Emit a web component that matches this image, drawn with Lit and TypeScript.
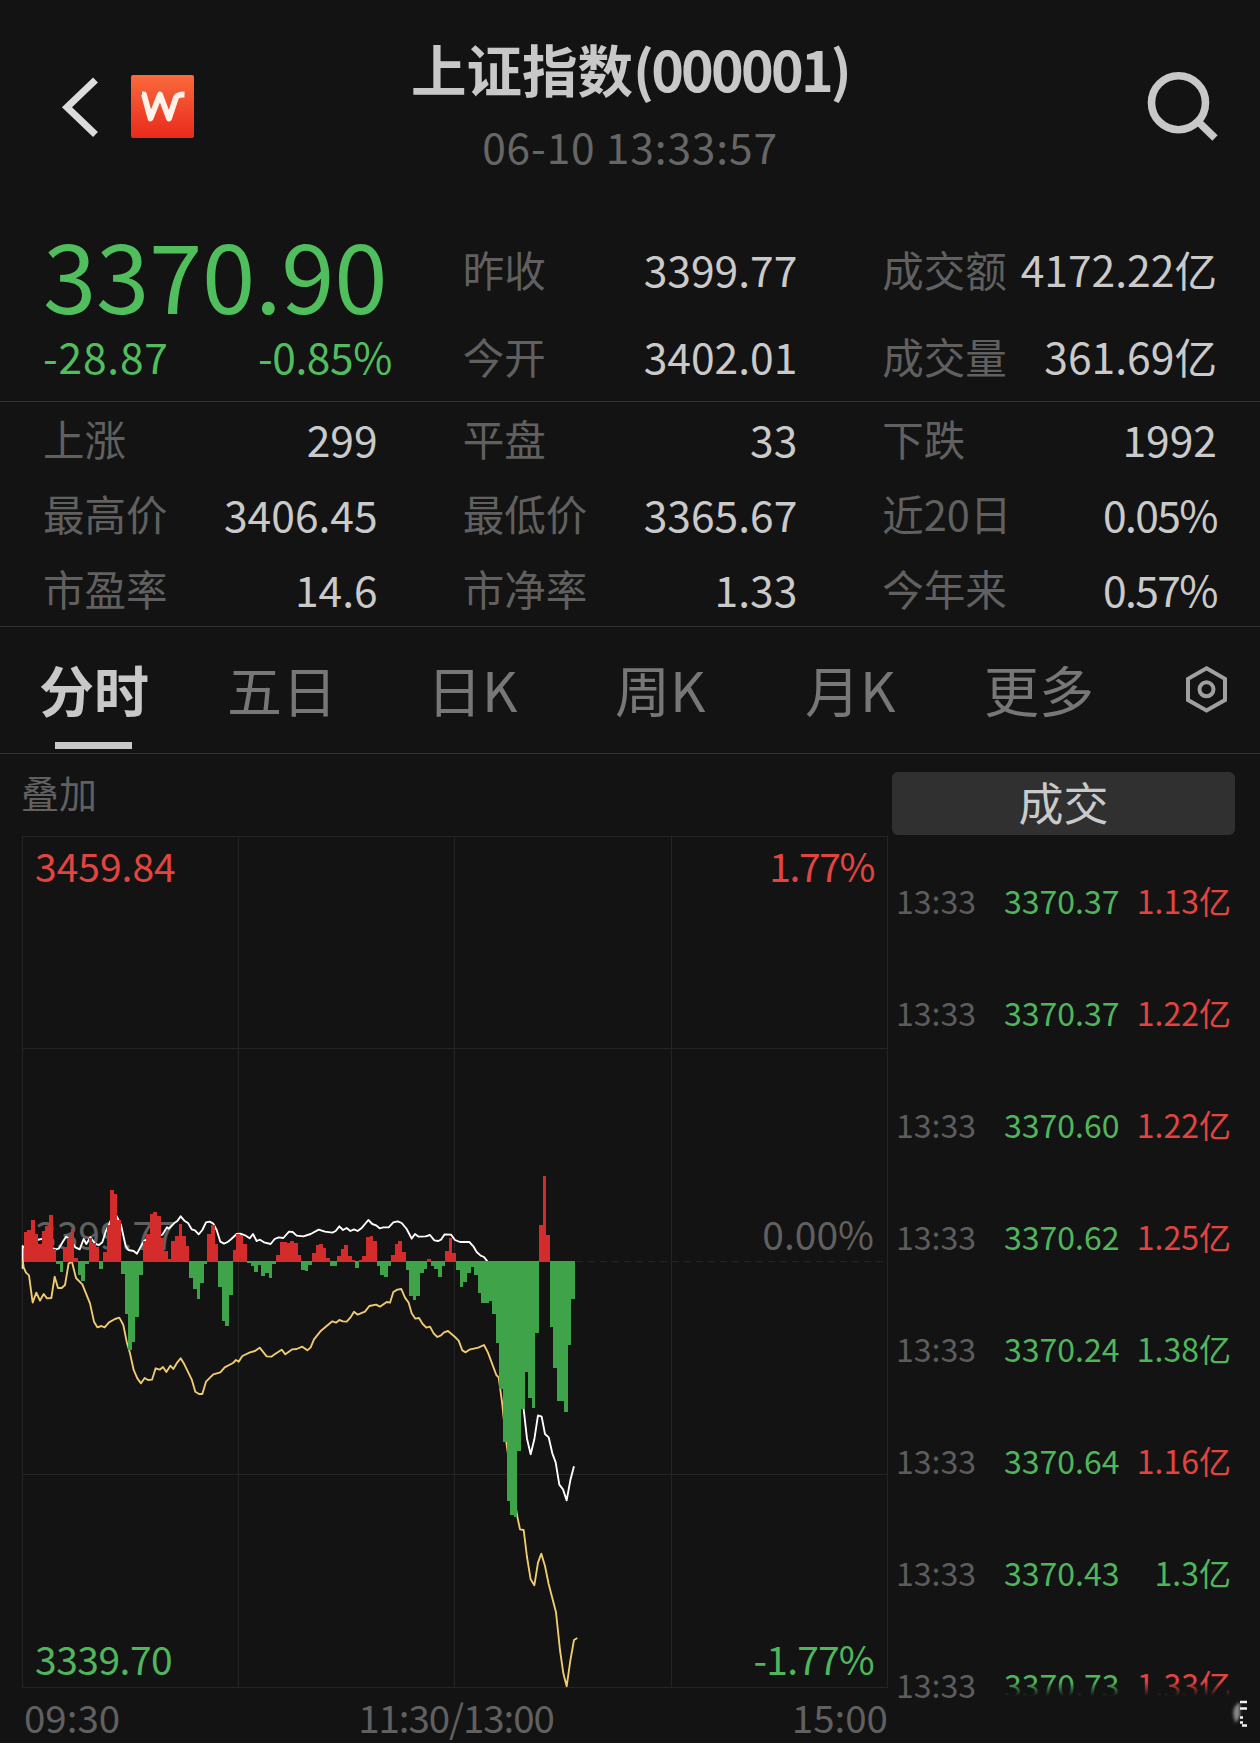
import { LitElement, html, css, svg } from "lit";
import { customElement } from "lit/decorators.js";
import { classMap } from "lit/directives/class-map.js";

const SUMMARY = [
  ["昨收", "3399.77"],
  ["成交额", "4172.22亿"],
  ["今开", "3402.01"],
  ["成交量", "361.69亿"],
];

const STATS = [
  ["上涨", "299"],
  ["平盘", "33"],
  ["下跌", "1992"],
  ["最高价", "3406.45"],
  ["最低价", "3365.67"],
  ["近20日", "0.05%"],
  ["市盈率", "14.6"],
  ["市净率", "1.33"],
  ["今年来", "0.57%"],
];

const TABS = ["分时", "五日", "日K", "周K", "月K", "更多"];

const TRADES: [string, string, string, "up" | "down"][] = [
  ["13:33", "3370.37", "1.13亿", "up"],
  ["13:33", "3370.37", "1.22亿", "up"],
  ["13:33", "3370.60", "1.22亿", "up"],
  ["13:33", "3370.62", "1.25亿", "up"],
  ["13:33", "3370.24", "1.38亿", "down"],
  ["13:33", "3370.64", "1.16亿", "up"],
  ["13:33", "3370.43", "1.3亿", "down"],
  ["13:33", "3370.73", "1.33亿", "up"],
];

/* One momentum bar per minute, in thirds of a pixel; positive is above the zero line. */
const BARS = [
  89, 93, 123, 82, 53, 91, 105, 139, 36, -8, -31, 44, 71, 96, 10, -41, -58, -8, 71, 54,
  42, -23, 29, 109, 214, 201, 123, -38, -157, -266, -241, -166, -42, 61, 81, 141, 148, 136, 71, 31,
  6, 62, 75, 111, 75, 47, -50, -82, -113, -64, -7, 82, 109, 52, -77, -178, -193, -100, 33, 82,
  80, 51, -5, -13, -32, -12, -44, -34, -49, -8, 20, 57, 57, 55, 61, 55, 19, -26, -28, -11,
  25, 48, 53, 41, 9, -13, -13, 15, 37, 50, 15, 3, -20, 4, 17, 73, 77, 61, -15, -40,
  -46, -14, 20, 52, 60, 28, -26, -104, -115, -104, -36, -23, 6, -14, -22, -47, -14, 32, 71, 25,
  -26, -76, -62, -34, -16, -41, -95, -125, -125, -120, -158, -246, -382, -543, -720, -761, -766, -570, -443, -333,
  -411, -440, -214, 108, 256, 78, -197, -320, -418, -418, -453, -250, -113,
];

const PRICE =
  "38,326 38,258 41,262 60,250 80,240 100,236 120,262 139,268 147,265 158,246 168,230 182,240 196,262 209,268 221,237 229,252 241,232 256,252 267,255 277,247 288,212 300,187 310,160 318,165 333,195 347,258 355,270 371,273 381,281 391,262 402,243 420,232 442,228 457,224 471,202 477,206 492,190 502,183 512,169 523,182 534,189 545,208 555,211 566,223 577,210 588,187 599,185 610,191 620,210 631,245 642,251 653,246 664,237 680,222 691,221 705,226 719,235 729,222 740,243 750,239 762,247 782,252 794,237 806,232 820,234 837,215 848,216 860,227 880,229 902,222 926,209 945,215 967,218 977,213 988,199 999,210 1010,204 1021,213 1032,208 1043,213 1056,203 1075,180 1087,192 1098,196 1109,205 1120,202 1136,202 1150,187 1163,184 1175,189 1190,207 1205,236 1215,222 1226,230 1247,229 1260,225 1273,241 1285,243 1293,239 1304,223 1323,224 1335,240 1350,246 1378,246 1390,259 1400,276 1412,287 1422,291 1432,304 1470,400 1510,560 1541,747 1551,836 1562,883 1573,838 1584,766 1595,770 1605,822 1616,832 1627,880 1637,907 1648,974 1659,988 1670,1021 1681,961 1692,919";

const AVERAGE =
  "38,300 41,322 48,338 57,346 68,428 79,398 90,422 101,402 111,415 124,414 134,350 144,384 155,384 165,375 176,310 186,306 198,354 217,373 240,430 252,485 262,502 274,498 284,502 297,487 315,477 328,473 340,495 350,545 360,580 371,630 382,655 393,670 404,654 414,660 426,659 437,625 449,629 459,621 469,636 481,617 490,627 502,607 512,595 523,613 545,658 556,695 567,702 577,702 588,665 610,643 631,637 644,622 669,609 678,600 686,605 697,588 720,577 735,573 749,563 770,589 784,590 794,583 815,569 826,583 847,568 860,567 877,560 892,571 902,562 912,538 933,512 967,484 978,488 988,480 999,484 1010,485 1021,473 1032,455 1043,464 1065,455 1078,438 1098,434 1110,440 1130,426 1140,428 1150,396 1162,389 1174,387 1185,413 1196,428 1205,460 1216,476 1227,474 1238,492 1249,503 1260,500 1271,520 1282,531 1293,526 1302,517 1314,513 1335,531 1346,542 1357,571 1367,577 1378,569 1405,563 1422,555 1434,578 1459,645 1466,652 1477,733 1481,774 1490,854 1505,960 1522,1070 1530,1108 1541,1110 1551,1191 1562,1258 1573,1276 1584,1208 1594,1181 1605,1218 1616,1272 1638,1357 1650,1470 1660,1540 1670,1579 1681,1502 1692,1440 1702,1434";

@customElement("app-header")
class AppHeader extends LitElement {
  static styles = css`
    :host { display: grid; grid-template-columns: 210px 1fr 210px; height: 209px; }
    .left { display: flex; align-items: flex-start; padding: 74px 0 0 60px; gap: 30px; }
    .left svg, .right svg { display: block; }
    .mid { display: flex; flex-direction: column; align-items: center; padding-top: 38px; gap: 22px; }
    .title { font-size: 55.5px; line-height: 60px; font-weight: 700; color: #c8c8c8; white-space: nowrap; margin: 0; }
    .code { letter-spacing: -2.8px; }
    .time { font-size: 42.5px; line-height: 52px; color: #666; letter-spacing: .85px; white-space: nowrap; }
    .right { padding: 66px 0 0 65px; }
  `;
  render() {
    return html`
      <div class="left">
        <svg width="41" height="66" viewBox="0 0 41 66"><path d="M35.5 6 7 33.3 35.500 60.500" fill="none" stroke="#dcdcdc" stroke-width="7"/></svg>
        <svg width="64" height="65" viewBox="0 0 64 65">
          <defs><linearGradient id="g" x1="0" y1="0" x2="0" y2="1"><stop offset="0" stop-color="#f96a3c"/><stop offset="1" stop-color="#e92a1c"/></linearGradient></defs>
          <rect x="0" y="1" width="63" height="63" rx="2" fill="url(#g)"/>
          <path d="M11 20.500H13L19.500 44.500 29 20.500 38 44.500 45 23.500Q46.500 20.500 53.500 20.500" fill="none" stroke="#fff3ea" stroke-width="5.8" stroke-linejoin="round"/>
        </svg>
      </div>
      <div class="mid">
        <h1 class="title">上证指数<span class="code">(000001)</span></h1>
        <div class="time">06-10 13:33:57</div>
      </div>
      <div class="right">
        <svg width="110" height="80" viewBox="0 0 110 80"><g fill="none" stroke="#c8c8c8"><circle cx="63.5" cy="36.700" r="27" stroke-width="7.6"/><path d="M83 55.500 100 72" stroke-width="7.5"/></g></svg>
      </div>`;
  }
}

@customElement("quote-summary")
class QuoteSummary extends LitElement {
  static styles = css`
    :host { display: block; }
    .grid { display: grid; grid-template-columns: repeat(3, minmax(0, 1fr)); column-gap: 85px; padding: 0 43px; }
    .top { padding-top: 16px; height: 176px; box-sizing: content-box; border-bottom: 1px solid #333; grid-template-rows: 87px 87px; }
    .quote { grid-row: 1 / 3; grid-column: 1; color: #50be5d; white-space: nowrap; }
    .price { font-size: 96px; line-height: 95px; letter-spacing: -.3px; }
    .change { display: flex; justify-content: space-between; font-size: 42.5px; line-height: 71px; width: 349px; letter-spacing: .8px; }
    .change .pct { letter-spacing: -.4px; }
    .cell { display: flex; justify-content: space-between; align-items: center; white-space: nowrap; }
    .label { font-size: 41.5px; color: #606060; }
    .value { font-size: 42.6px; color: #cacaca; }
    .pct { letter-spacing: -1.6px; }
    .rest { grid-auto-rows: 70px; row-gap: 5px; padding-top: 1px; padding-bottom: 3px; border-bottom: 1px solid #333; }
  `;
  private cell([label, value]: string[]) {
    return html`<div class="cell"><span class="label">${label}</span><span class=${classMap({ value: true, pct: value.endsWith("%") })}>${value}</span></div>`;
  }
  render() {
    return html`
      <div class="grid top">
        <div class="quote">
          <div class="price">3370.90</div>
          <div class="change"><span>-28.87</span><span class="pct">-0.85%</span></div>
        </div>
        ${SUMMARY.map((c) => this.cell(c))}
      </div>
      <div class="grid rest">${STATS.map((c) => this.cell(c))}</div>`;
  }
}

@customElement("period-tabs")
class PeriodTabs extends LitElement {
  static styles = css`
    :host { display: grid; grid-template-columns: 188px 200px 188px 190px 179px 200px 1fr; height: 126px; padding-left: 39px; border-bottom: 1px solid #333; }
    .tab { font-size: 55px; line-height: 123px; color: #777; white-space: nowrap; justify-self: start; position: relative; }
    .active { font-weight: 700; color: #c8c8c8; }
    .active::after { content: ""; position: absolute; left: 16px; top: 115px; width: 77px; height: 7px; background: #c8c8c8; }
    .gear { display: block; margin-top: 38px; }
  `;
  render() {
    return html`
      ${TABS.map((t, i) => html`<span class=${classMap({ tab: true, active: i === 0 })}>${t}</span>`)}
      <svg class="gear" width="46" height="50" viewBox="0 0 46 50"><g fill="none" stroke="#a0a0a0" stroke-width="4"><path d="M22.500 3.200 41 13.800V35L22.500 45.500 4 35V13.800Z"/><circle cx="22.500" cy="24.300" r="7"/></g></svg>`;
  }
}

@customElement("minute-chart")
class MinuteChart extends LitElement {
  static styles = css`
    :host { display: block; width: 888px; }
    .overlay-btn { height: 82px; line-height: 75px; padding-left: 21px; font-size: 38px; color: #606060; }
    .plot { position: relative; height: 852px; }
    .plot svg { position: absolute; left: 0; top: 0; display: block; }
    .tag { position: absolute; font-size: 39px; line-height: 50px; color: #606060; white-space: nowrap; }
    .l { left: 35px; }
    .r { right: 14px; letter-spacing: -1.4px; }
    .t { top: 4px; }
    .m { top: 372px; }
    .b { top: 797px; }
    .l.b { letter-spacing: -.5px; }
    .r.b { letter-spacing: -.8px; }
    .r.m { letter-spacing: 0; }
    .up { color: #e2453f; }
    .down { color: #50b65c; }
    .axis { display: flex; justify-content: space-between; padding: 0 0 0 24px; font-size: 38.5px; line-height: 56px; color: #606060; }
    .mid { letter-spacing: -1.1px; }
  `;
  render() {
    return html`
      <div class="overlay-btn">叠加</div>
      <div class="plot">
        <svg width="888" height="852" viewBox="0 836 888 852">
          <g stroke="#252525" stroke-width="1">
            ${[22.5, 238.5, 454.5, 671.5, 887.5].map((x) => svg`<path d="M${x} 836V1688"/>`)}
            ${[836.5, 1048.5, 1474.5, 1687.5].map((y) => svg`<path d="M22 ${y}H888"/>`)}
            <path d="M576 1261.500H888" stroke-dasharray="7 5"/>
          </g>
        </svg>
        <span class="tag l m">3399.77</span>
        <svg width="888" height="852" viewBox="0 836 888 852">
          <g transform="translate(10 1160) scale(.33333)">
            <g fill="none" stroke-width="5.6" stroke-linejoin="round">
              <polyline points=${PRICE} stroke="#fff"/>
              <polyline points=${AVERAGE} stroke="#f0cb72"/>
            </g>
            <g shape-rendering="crispEdges">
              ${BARS.map((v, i) => svg`<rect x=${41 + i * 10.81} y=${v > 0 ? 304 - v : 302} width="10.9" height=${Math.abs(v) + 2} fill=${v > 0 ? "#d32c2a" : "#3fa34a"}/>`)}
            </g>
          </g>
        </svg>
        <span class="tag l t up">3459.84</span>
        <span class="tag r t up">1.77%</span>
        <span class="tag r m">0.00%</span>
        <span class="tag l b down">3339.70</span>
        <span class="tag r b down">-1.77%</span>
      </div>
      <div class="axis"><span>09:30</span><span class="mid">11:30/13:00</span><span>15:00</span></div>`;
  }
}

@customElement("trade-list")
class TradeList extends LitElement {
  static styles = css`
    :host { display: block; position: relative; width: 372px; height: 989px; overflow: hidden; }
    .head { margin: 18px 25px 0 4px; height: 63px; border-radius: 6px; background: #303030; color: #cacaca; font-size: 45px; line-height: 60px; text-align: center; }
    .rows { padding-top: 9px; }
    .row { display: grid; grid-template-columns: 108px 1fr auto; padding: 0 29px 0 8px; height: 112px; line-height: 112px; font-size: 32px; white-space: nowrap; }
    .time { color: #5c5c5c; }
    .up { color: #e2453f; }
    .down { color: #50b65c; }
    .fade { position: absolute; left: 113px; right: 0; top: 928px; bottom: 0; background: linear-gradient(rgba(19, 19, 19, 0), #131313 14px); }
    .glyph { position: absolute; left: 338px; top: 942px; }
  `;
  render() {
    return html`
      <div class="head">成交</div>
      <div class="rows">
        ${TRADES.map(([t, p, a, d]) => html`<div class="row"><span class="time">${t}</span><span class="down">${p}</span><span class=${d}>${a}</span></div>`)}
      </div>
      <div class="fade"></div>
      <svg class="glyph" width="24" height="36" viewBox="0 0 24 36">
        <defs>
          <filter id="soft" x="-50%" y="-50%" width="200%" height="200%"><feGaussianBlur stdDeviation="1.6"/></filter>
        </defs>
        <path d="M13 7C6 10 6 20 10 27L14 20V7Z" fill="#888" filter="url(#soft)"/>
        <path d="M14 6H21M14 12.500H21M14 21.500H17M14 26.500H17M16 29.500H21" stroke="#f2f2f2" stroke-width="2.400" fill="none"/>
      </svg>`;
  }
}

@customElement("app-root")
class AppRoot extends LitElement {
  static styles = css`
    :host { display: block; width: 1260px; height: 1743px; overflow: hidden; background: #131313; font-family: "Noto Sans CJK SC", sans-serif; }
    .main { display: flex; }
  `;
  render() {
    return html`
      <app-header></app-header>
      <quote-summary></quote-summary>
      <period-tabs></period-tabs>
      <div class="main"><minute-chart></minute-chart><trade-list></trade-list></div>`;
  }
}
